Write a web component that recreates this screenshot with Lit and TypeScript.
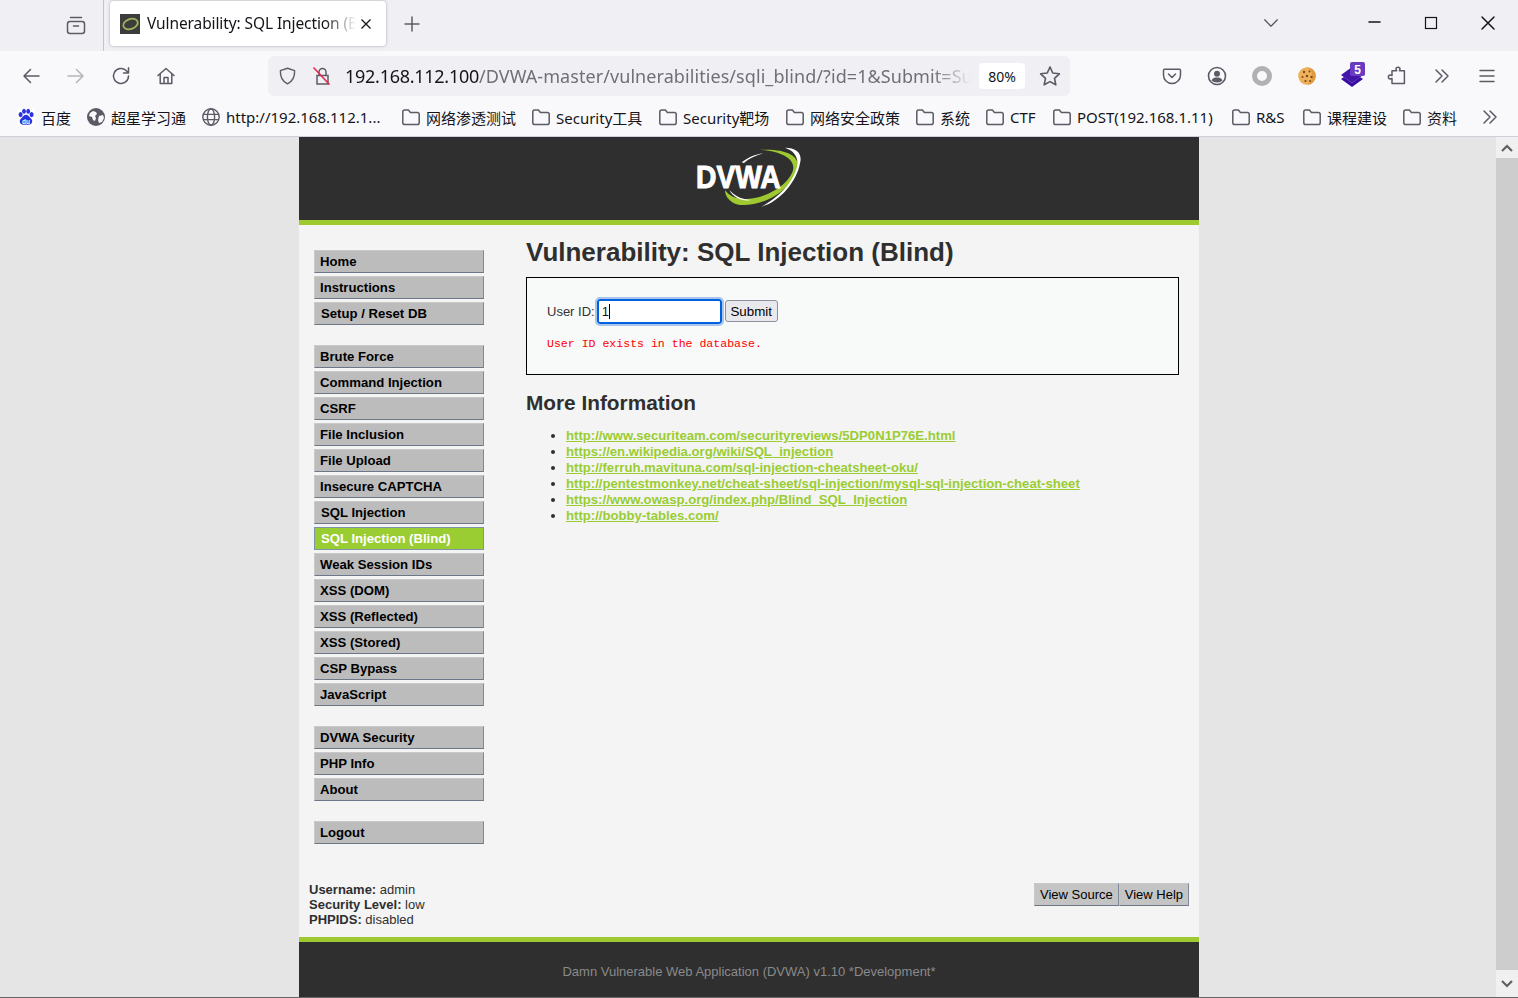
import { LitElement, html, svg, css, unsafeCSS } from "lit";
import { customElement } from "lit/decorators.js";

const UI = unsafeCSS(`"Noto Sans", "Noto Sans CJK SC", sans-serif`);

const ic = (body: unknown, size = 20) =>
  html`<svg class="ic" width=${size} height=${size} viewBox="0 0 20 20" fill="none" stroke="currentColor" stroke-width="1.5" stroke-linecap="round" stroke-linejoin="round">${body}</svg>`;

const folder = html`<svg width="18" height="18" viewBox="0 0 18 18" fill="none" stroke="#5b5b66" stroke-width="1.5" stroke-linejoin="round"><path d="M.8 3.800c0-1 .8-1.800 1.800-1.800h3.800l2 2.400h7c1 0 1.800.8 1.800 1.800v8.600c0 1-.8 1.800-1.800 1.800H2.600c-1 0-1.800-.8-1.800-1.800z"/></svg>`;
const globe = html`<svg width="18" height="18" viewBox="0 0 18 18" fill="none" stroke="#5b5b66" stroke-width="1.4"><circle cx="9" cy="9" r="8.200"/><ellipse cx="9" cy="9" rx="3.600" ry="8.200"/><path d="M1.200 6.400h15.600M1.200 11.600h15.600"/></svg>`;
const globeFill = html`<svg width="18" height="18" viewBox="0 0 18 18"><circle cx="9" cy="9" r="9" fill="#5b5b66"/><path d="M3 5l3-2 3 1 1 2-2 2 1 2-1 3-2-1-1-3-3-1zM12 8l4-1 1 3-2 4-3 1-1-3z" fill="#f9f9fb"/></svg>`;
const baidu = html`<svg width="18" height="18" viewBox="0 0 18 18"><rect width="18" height="18" fill="#fff"/><g fill="#2932e1"><ellipse cx="3.600" cy="6.600" rx="2" ry="2.600"/><ellipse cx="7" cy="3.200" rx="1.900" ry="2.500"/><ellipse cx="11.200" cy="3.200" rx="1.900" ry="2.500"/><ellipse cx="14.600" cy="6.600" rx="2" ry="2.600"/><path d="M9 6.800c2 0 3 1.800 4.200 3 1.500 1.400 2.300 2.500 2 4-.3 2-2 3.200-4 3-1-.1-1.500-.4-2.200-.4s-1.200.3-2.200.4c-2 .2-3.700-1-4-3-.3-1.500.5-2.600 2-4C6 8.600 7 6.800 9 6.800z"/></g><text x="9" y="15.500" text-anchor="middle" font-family="Liberation Sans" font-weight="700" font-size="6.500" fill="#fff">du</text></svg>`;

const bookmarks: [unknown, string, number][] = [
  [baidu, "百度", 54],
  [globeFill, "超星学习通", 99],
  [globe, "http://192.168.112.1...", 184],
  [folder, "网络渗透测试", 114],
  [folder, "Security工具", 111],
  [folder, "Security靶场", 111],
  [folder, "网络安全政策", 114],
  [folder, "系统", 54],
  [folder, "CTF", 51],
  [folder, "POST(192.168.1.11)", 163],
  [folder, "R&S", 55],
  [folder, "课程建设", 84],
  [folder, "资料", 54],
];

type Nav = { t: string; active?: boolean; shift?: boolean };
const menu: Nav[][] = [
  [{ t: "Home" }, { t: "Instructions" }, { t: "Setup / Reset DB", shift: true }],
  [
    { t: "Brute Force" },
    { t: "Command Injection" },
    { t: "CSRF" },
    { t: "File Inclusion" },
    { t: "File Upload" },
    { t: "Insecure CAPTCHA" },
    { t: "SQL Injection", shift: true },
    { t: "SQL Injection (Blind)", active: true, shift: true },
    { t: "Weak Session IDs" },
    { t: "XSS (DOM)" },
    { t: "XSS (Reflected)" },
    { t: "XSS (Stored)" },
    { t: "CSP Bypass" },
    { t: "JavaScript" },
  ],
  [{ t: "DVWA Security" }, { t: "PHP Info" }, { t: "About" }],
  [{ t: "Logout" }],
];

const links = [
  "http://www.securiteam.com/securityreviews/5DP0N1P76E.html",
  "https://en.wikipedia.org/wiki/SQL_injection",
  "http://ferruh.mavituna.com/sql-injection-cheatsheet-oku/",
  "http://pentestmonkey.net/cheat-sheet/sql-injection/mysql-sql-injection-cheat-sheet",
  "https://www.owasp.org/index.php/Blind_SQL_Injection",
  "http://bobby-tables.com/",
];

const chevrons = ic(svg`<path d="M4 4l6 6-6 6M10 4l6 6-6 6"/>`);

@customElement("app-root")
export class AppRoot extends LitElement {
  static styles = css`
    :host {
      display: flex;
      flex-direction: column;
      width: 1518px;
      height: 998px;
      overflow: hidden;
      font-family: "Liberation Sans", Arial, sans-serif;
      background: #f9f9fb;
      box-sizing: border-box;
      border-bottom: 1px solid #666;
    }
    .ic { display: block; }

    .tabs { height: 51px; flex: none; display: flex; background: #f0f0f4; color: #5b5b66; font-family: ${UI}; }
    .view { width: 104px; display: flex; align-items: center; justify-content: flex-end; padding: 0 17px 1px 0; box-sizing: border-box; border-right: 1px solid #c4c4c8; }
    .tab {
      width: 276px; height: 45px; margin: 1px 0 0 6px;
      background: #fff; border-radius: 4px; box-shadow: 0 0 3px rgba(0,0,0,.3);
      display: flex; align-items: center; padding: 0 14px 0 10px; box-sizing: border-box;
    }
    .fav { width: 20px; height: 20px; flex: none; margin-right: 7px; }
    .tab-title {
      flex: 1; min-width: 0; white-space: nowrap; overflow: hidden; color: #15141a;
      font-size: 15.500px; letter-spacing: -0.1px; padding-bottom: 1px;
      -webkit-mask-image: linear-gradient(to right, #000 85%, transparent 100%);
      mask-image: linear-gradient(to right, #000 85%, transparent 100%);
    }
    .tab-x { width: 14px; height: 14px; flex: none; color: #15141a; margin: 0 -1px 0 3px; }
    .plus { margin: 14px 0 0 16px; width: 20px; height: 20px; }
    .winctl { margin-left: auto; display: flex; align-items: center; color: #15141a; height: 46px; padding-right: 2px; }
    .list { color: #5b5b66; margin-right: 65px; }
    .wbtn { width: 57px; display: flex; justify-content: center; }

    .toolbar {
      height: 45px; flex: none; display: flex; align-items: center; padding: 5px 9px 0 8px; box-sizing: border-box;
      background: #f9f9fb; color: #5b5b66; font-family: ${UI};
    }
    .tb { width: 45px; height: 40px; flex: none; display: flex; align-items: center; justify-content: center; }
    .tb.off { color: #b4b4ba; }
    .url {
      width: 802px; height: 40px; flex: none; margin-left: 80px; margin-right: 79px;
      background: #f0f0f4; border-radius: 6px; display: flex; align-items: center; box-sizing: border-box; padding: 0 9px 0 10px;
    }
    .lock { margin-left: 15px; margin-right: 13px; flex: none; }
    .addr {
      width: 626px; flex: none; white-space: nowrap; overflow: hidden; font-size: 18px; color: #6f6f78; letter-spacing: .07px;
      -webkit-mask-image: linear-gradient(to right, #000 94%, transparent 100%);
      mask-image: linear-gradient(to right, #000 94%, transparent 100%);
    }
    .addr b { font-weight: 400; color: #15141a; letter-spacing: -0.27px; }
    .zoom { width: 46px; height: 26px; margin-left: 8px; flex: none; background: #fff; border-radius: 4px; display: flex; align-items: center; justify-content: center; color: #15141a; font-size: 14px; }
    .star { margin-left: 14px; }

    .bm {
      height: 41px; flex: none; display: flex; align-items: center; gap: 16px; padding: 2px 0 0 17px; box-sizing: border-box;
      background: #f9f9fb; border-bottom: 1px solid #cfcfd8; color: #15141a;
      font-family: ${UI}; font-size: 15px;
    }
    .bm-i { display: flex; align-items: center; gap: 6px; white-space: nowrap; flex: none; }
    .bm-i svg { flex: none; }
    .bm-more { margin-left: 7px; color: #5b5b66; }

    .view-area { flex: 1; min-height: 0; display: flex; background: #e5e5e5; }
    .main { flex: 1; display: flex; justify-content: center; padding-left: 2px; min-width: 0; }
    .page { width: 900px; display: flex; flex-direction: column; background: #f4f4f4; color: #2f2f2f; }
    .hdr { height: 83px; flex: none; background: #2f2f2f; display: flex; justify-content: center; border-bottom: 5px solid #9fc930; }
    .logo { margin-right: 8px; }
    .logo text { font-family: "Liberation Sans", sans-serif; font-weight: 700; }

    .body { flex: 1; min-height: 0; display: flex; flex-direction: column; }
    .top { flex: 1; min-height: 0; display: flex; padding: 25px 20px 0 15px; }
    nav { width: 170px; flex: none; margin-right: 42px; }
    .grp { display: flex; flex-direction: column; gap: 3px; margin-bottom: 20px; }
    .item {
      height: 23px; box-sizing: border-box; background: #bcbcbc; color: #000;
      border: 1px solid #c9c9c9; border-right-color: #7f8a99; border-bottom-color: #6c7889;
      font-size: 13.150px; font-weight: 700; line-height: 21px; padding-left: 5px; white-space: nowrap;
    }
    .item.shift { padding-left: 6px; }
    .item.active { background: #9acd32; color: #fff; border-color: #7f93a8; }

    article { flex: 1; min-width: 0; }
    h1 { margin: -13px 0 0; font-size: 26px; line-height: 30px; font-weight: 700; color: #2f2f2f; height: 40px; }
    .vuln { height: 98px; box-sizing: border-box; border: 1px solid #000; background: #f8f9f9; padding: 20px 20px; }
    .form { display: flex; align-items: center; font-size: 13px; color: #333; height: 26px; }
    .inp { position: relative; margin-left: 2px; width: 125px; height: 25px; flex: none; }
    .inp input {
      width: 100%; height: 100%; box-sizing: border-box; margin: 0; padding: 0 3px;
      border: 2px solid #0060df; border-radius: 3px; outline: 2px solid #a9c5ea; outline-offset: 0;
      background: #fff; font: 13px "Liberation Sans", sans-serif; color: #15141a;
    }
    .caret { position: absolute; left: 12px; top: 5px; width: 1px; height: 15px; background: #000; }
    .sub {
      margin-left: 3px; width: 53px; height: 22px; box-sizing: border-box; padding: 0; flex: none;
      border: 1px solid #8f8f9d; border-radius: 3px; background: #e9e9ed; color: #000; font: 13.300px "Liberation Sans", sans-serif;
    }
    .msg { margin: 12px 0 0; font: 11.550px/15px "Liberation Mono", monospace; color: #f00; white-space: pre; }
    h2 { margin: 15px 0 0; font-size: 20.800px; line-height: 26px; font-weight: 700; color: #2f2f2f; }
    ul { margin: 12px 0 0; padding: 0 0 0 40px; }
    li { font-size: 13.150px; line-height: 16px; color: #2f2f2f; }
    li a { color: #9acd32; font-weight: 700; text-decoration: underline; }

    .bot { height: 55px; flex: none; display: flex; justify-content: space-between; padding: 0 10px; box-sizing: border-box; }
    .info { font-size: 13px; line-height: 15px; color: #2f2f2f; }
    .info b { font-weight: 700; }
    .btns { display: flex; margin-top: 1px; height: 23px; }
    .vbtn {
      height: 23px; box-sizing: border-box; background: #c4c4c4; color: #000; font-size: 13px; line-height: 21px; padding: 0 5px;
      border: 1px solid #c9c9c9; border-right-color: #7f8a99; border-bottom-color: #6c7889; white-space: nowrap;
    }
    .ftr {
      height: 60px; flex: none; box-sizing: border-box; background: #2f2f2f; border-top: 5px solid #9fc930;
      color: #8a8a8a; font-size: 13px; text-align: center; line-height: 60px; white-space: nowrap;
    }

    .sb { width: 22px; flex: none; display: flex; flex-direction: column; background: #f0f0f0; }
    .sb-btn { height: 21px; flex: none; display: flex; align-items: center; justify-content: center; color: #606060; }
    .sb-btn.d { height: 27px; }
    .thumb { flex: 1; background: #cdcdcd; }
  `;

  render() {
    return html`
      <div class="tabs">
        <div class="view">${ic(svg`<rect x="1.500" y="6.500" width="17" height="12" rx="2.500"/><path d="M4.500 2.500h11M7.500 11h5"/>`)}</div>
        <div class="tab">
          <svg class="fav" viewBox="0 0 20 20"><rect width="20" height="20" fill="#3c3c3c"/><ellipse cx="10.500" cy="10" rx="7.500" ry="5" fill="none" stroke="#9fb45c" stroke-width="1.800" transform="rotate(-20 10.500 10)"/></svg>
          <div class="tab-title">Vulnerability: SQL Injection (Blind)</div>
          <svg class="tab-x" viewBox="0 0 14 14" fill="none" stroke="currentColor" stroke-width="1.300"><path d="M2.500 2.500l9 9M11.500 2.500l-9 9"/></svg>
        </div>
        <div class="plus">${ic(svg`<path d="M10 3v14M3 10h14"/>`)}</div>
        <div class="winctl">
          <div class="list">${ic(svg`<path d="M3 6.500l7 7 7-7"/>`, 18)}</div>
          <div class="wbtn">${ic(svg`<path d="M5 9h11"/>`)}</div>
          <div class="wbtn"><svg width="14" height="14" viewBox="0 0 14 14" fill="none" stroke="currentColor" stroke-width="1.200"><rect x="1.500" y="1.500" width="11" height="11"/></svg></div>
          <div class="wbtn">${ic(svg`<path d="M4 4l12 12M16 4L4 16"/>`)}</div>
        </div>
      </div>

      <div class="toolbar">
        <div class="tb">${ic(svg`<path d="M18 10H3M9.500 3.500L3 10l6.500 6.500"/>`)}</div>
        <div class="tb off">${ic(svg`<path d="M2 10h15M10.500 3.500L17 10l-6.500 6.500"/>`)}</div>
        <div class="tb">${ic(svg`<path d="M17.500 10a7.500 7.500 0 1 1-2.400-5.500L17.500 7M17.500 1.800V7h-5"/>`)}</div>
        <div class="tb">${ic(svg`<path d="M2 9.500L10 2.500l8 7M4.200 8v9.500h11.600V8M8 17.500v-6h4v6"/>`)}</div>
        <div class="url">
          ${ic(svg`<path d="M10 1.800l7.500 2.500c.3 7-2 11.500-7.500 14-5.500-2.500-7.800-7-7.500-14z"/>`)}
          <svg class="lock" width="20" height="20" viewBox="0 0 20 20" fill="none" stroke="#5b5b66" stroke-width="1.500"><path d="M7 9V6a3.500 3.500 0 0 1 7 0v3M5 9.500h11v8.500H5z"/><path d="M1.500 1.500l16 17" stroke="#e22850" stroke-width="1.600"/></svg>
          <div class="addr"><b>192.168.112.100</b>/DVWA-master/vulnerabilities/sqli_blind/?id=1&amp;Submit=Submit#</div>
          <div class="zoom">80%</div>
          <div class="star">${ic(svg`<path d="M10 1.800l2.500 5.500 6 .7-4.400 4.100 1.200 5.900L10 15.100l-5.300 2.900 1.200-5.900L1.500 8l6-.7z"/>`, 22)}</div>
        </div>
        <div class="tb">${ic(svg`<path d="M2.500 3.200h15c.6 0 1 .4 1 1V9a8.500 8.500 0 0 1-17 0V4.200c0-.6.4-1 1-1zM6.500 8l3.500 3.500L13.500 8"/>`)}</div>
        <div class="tb"><svg width="20" height="20" viewBox="0 0 20 20"><circle cx="10" cy="10" r="8.500" fill="none" stroke="#5b5b66" stroke-width="1.600"/><circle cx="10" cy="7.800" r="3" fill="#5b5b66"/><path d="M4.500 14.500c1-2.500 3-3 5.500-3s4.500.5 5.500 3c-1.300 1.300-3.300 2-5.500 2s-4.200-.7-5.500-2z" fill="#5b5b66"/></svg></div>
        <div class="tb"><svg width="20" height="20" viewBox="0 0 20 20"><circle cx="10" cy="10" r="7.500" fill="none" stroke="#b1b1b1" stroke-width="5"/></svg></div>
        <div class="tb"><svg width="18" height="18" viewBox="0 0 18 18"><circle cx="9" cy="9" r="8.800" fill="#eeb058"/><path d="M9 .2a8.800 8.800 0 0 1 0 17.600A10 10 0 0 0 9 .2z" fill="#e09a3f"/><g fill="#7a4a1c"><circle cx="6" cy="5" r="1.200"/><circle cx="11.500" cy="4.500" r="1"/><circle cx="4.500" cy="10" r="1"/><circle cx="9" cy="9" r="1.200"/><circle cx="13.500" cy="10" r="1.200"/><circle cx="7.500" cy="14" r="1.100"/><circle cx="12" cy="14" r="1"/></g></svg></div>
        <div class="tb"><svg width="26" height="28" viewBox="0 0 26 28"><path d="M2 17l3-2 8 6 8-6 3 2-11 8z" fill="#3a0ca3"/><path d="M13 5l11 8-11 8-11-8z" fill="#4314a8"/><rect x="11" y="0" width="15" height="14" rx="2" fill="#6a3ac0"/><text x="18.500" y="11.500" text-anchor="middle" font-family="Liberation Sans" font-weight="700" font-size="12" fill="#fff">5</text></svg></div>
        <div class="tb">${ic(svg`<path d="M9.500 3.500c0-2.500 4-2.500 4 0 0 .8-.3 1.200-.6 1.700h5v12.800H5.500v-5c-.5.3-1 .5-1.700.5-2.500 0-2.500-4 0-4 .7 0 1.200.2 1.700.5V5.200h4.600c-.3-.5-.6-.9-.6-1.700z" transform="translate(-.5 -.5)"/>`)}</div>
        <div class="tb">${chevrons}</div>
        <div class="tb">${ic(svg`<path d="M3 4.500h14M3 10h14M3 15.500h14"/>`)}</div>
      </div>

      <div class="bm">
        ${bookmarks.map(([i, t, w]) => html`<div class="bm-i" style="width:${w}px">${i}<span>${t}</span></div>`)}
        <div class="bm-more">${chevrons}</div>
      </div>

      <div class="view-area">
        <div class="main">
          <div class="page">
            <div class="hdr">
              <svg class="logo" width="170" height="83" viewBox="0 6 510 249">
                <path d="M300 45C380 40 425 65 412 105 395 165 310 215 240 210 210 205 195 185 195 165 205 180 225 192 255 192 330 190 395 140 400 100 402 70 360 48 300 45Z" fill="#9fc930"/>
                <path d="M375 38C410 38 428 55 420 85 410 140 360 200 305 215 350 190 395 150 410 100 418 70 405 48 375 38Z" fill="#fff"/>
                <path d="M245 82C265 68 285 58 310 55 285 62 265 72 252 84ZM208 165C225 185 250 195 275 195 250 200 220 190 208 165Z" fill="#fff"/>
                <text x="108" y="160" font-size="92" fill="#fff" stroke="#fff" stroke-width="3" textLength="254" lengthAdjust="spacingAndGlyphs">DVWA</text>
              </svg>
            </div>
            <div class="body">
              <div class="top">
                <nav>
                  ${menu.map(
                    (g) => html`<div class="grp">
                      ${g.map(
                        (n) => html`<div class="item ${n.active ? "active" : ""} ${n.shift ? "shift" : ""}">${n.t}</div>`
                      )}
                    </div>`
                  )}
                </nav>
                <article>
                  <h1>Vulnerability: SQL Injection (Blind)</h1>
                  <div class="vuln">
                    <div class="form">
                      <span>User ID:</span>
                      <div class="inp"><input value="1" /><span class="caret"></span></div>
                      <button class="sub">Submit</button>
                    </div>
                    <div class="msg">User ID exists in the database.</div>
                  </div>
                  <h2>More Information</h2>
                  <ul>
                    ${links.map((l) => html`<li><a href="#">${l}</a></li>`)}
                  </ul>
                </article>
              </div>
              <div class="bot">
                <div class="info">
                  <div><b>Username:</b> admin</div>
                  <div><b>Security Level:</b> low</div>
                  <div><b>PHPIDS:</b> disabled</div>
                </div>
                <div class="btns"><div class="vbtn">View Source</div><div class="vbtn">View Help</div></div>
              </div>
            </div>
            <div class="ftr">Damn Vulnerable Web Application (DVWA) v1.10 *Development*</div>
          </div>
        </div>
        <div class="sb">
          <div class="sb-btn"><svg width="12" height="8" viewBox="0 0 12 8" fill="none" stroke="currentColor" stroke-width="2.200"><path d="M1 7l5-5 5 5"/></svg></div>
          <div class="thumb"></div>
          <div class="sb-btn d"><svg width="12" height="8" viewBox="0 0 12 8" fill="none" stroke="currentColor" stroke-width="2.200"><path d="M1 1l5 5 5-5"/></svg></div>
        </div>
      </div>
    `;
  }
}
